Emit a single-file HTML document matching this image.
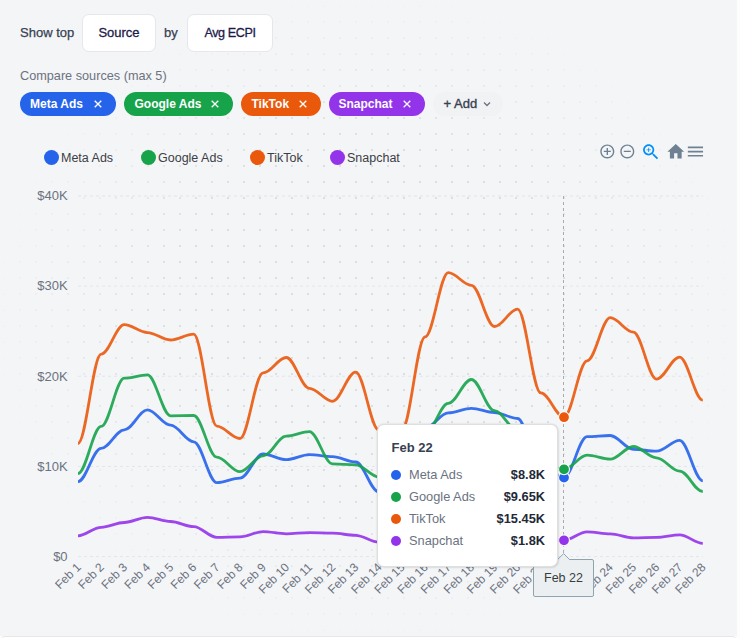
<!DOCTYPE html>
<html><head><meta charset="utf-8">
<style>
html,body{margin:0;padding:0;}
body{width:740px;height:638px;overflow:hidden;position:relative;background:#fdfdfd;font-family:"Liberation Sans",sans-serif;}
#page{position:absolute;left:0;top:0;width:737px;height:636px;background:#f4f5f7;overflow:hidden;}
#dots{position:absolute;left:0;top:0;width:737px;height:636px;
  background-image:radial-gradient(circle at 4px 6px,#dcdee2 0.9px,transparent 1.3px);
  background-size:16px 16px;background-position:0 0;
  -webkit-mask-image:radial-gradient(ellipse at center,#000 38%,rgba(0,0,0,0) 73%);
  mask-image:radial-gradient(ellipse at center,#000 38%,rgba(0,0,0,0) 73%);}
#bottom{position:absolute;left:0;top:636px;width:737px;height:10px;background:#fff;border-top:1px solid #e5e7eb;border-radius:5px 5px 0 0;box-sizing:border-box;}
.abs{position:absolute;white-space:nowrap;}
.lbl{font-size:13px;color:#374151;-webkit-text-stroke:0.25px #374151;}
.btn{position:absolute;top:14px;height:38px;box-sizing:border-box;background:#fff;border:1px solid #e5e7eb;border-radius:7px;font-size:13px;color:#1e1b4b;font-weight:normal;-webkit-text-stroke:0.3px #1e1b4b;line-height:36px;text-align:center;}
.chip{position:absolute;top:92px;height:24px;border-radius:12px;color:#fff;font-size:12px;font-weight:bold;line-height:24px;}
.chip .t{position:absolute;top:0;}
.chip .x{position:absolute;top:0;font-weight:normal;font-size:14px;}
.leg{position:absolute;top:151px;font-size:12.5px;color:#3b4046;}
.legdot{position:absolute;width:15px;height:15px;border-radius:50%;top:149.5px;}
svg{position:absolute;left:0;top:0;}
.yl{font-size:13px;fill:#6b7280;font-family:"Liberation Sans",sans-serif;}
.xl{font-size:12px;fill:#6b7280;font-family:"Liberation Sans",sans-serif;}
#tt{position:absolute;left:377px;top:424px;width:180.5px;height:143px;box-sizing:border-box;background:#fff;border:1px solid #e0e0e0;border-radius:7px;box-shadow:0 0 2px rgba(0,0,0,0.16),1px 1px 3px -1px rgba(0,0,0,0.12);}
#tt .h{position:absolute;left:13.5px;top:14.5px;font-size:13px;font-weight:bold;color:#374151;}
#tt .r{position:absolute;left:13px;height:18px;width:156px;}
#tt .d{position:absolute;left:0;top:3px;width:10px;height:10px;border-radius:50%;}
#tt .n{position:absolute;left:18px;top:0.8px;font-size:12.8px;color:#6b7280;}
#tt .v{position:absolute;right:2px;top:0.8px;font-size:12.8px;font-weight:bold;color:#1f2937;}
#xt{position:absolute;left:533px;top:559px;width:61px;height:37.5px;box-sizing:border-box;background:#eceff1;border:1px solid #90a4ae;border-radius:2px;font-size:12.5px;color:#373d3f;text-align:center;line-height:37.5px;}
</style></head>
<body>
<div id="page">
<div id="dots"></div>

<div class="abs lbl" style="left:20px;top:25px;">Show top</div>
<div class="btn" style="left:82px;width:74px;">Source</div>
<div class="abs lbl" style="left:164px;top:25px;">by</div>
<div class="btn" style="left:187px;width:86px;letter-spacing:-0.4px;font-size:12.6px;">Avg ECPI</div>

<div class="abs" style="left:20px;top:69px;font-size:12.7px;color:#6b7280;">Compare sources (max 5)</div>

<div class="chip" style="left:20px;width:96px;background:#2563eb;"><span class="t" style="left:10px;">Meta Ads</span><svg width="96" height="24" style="position:absolute;left:0;top:0"><path d="M74.7 8.7 L81.3 15.3 M81.3 8.7 L74.7 15.3" stroke="#fff" stroke-width="1.3"/></svg></div>
<div class="chip" style="left:124px;width:109px;background:#16a34a;"><span class="t" style="left:10.5px;">Google Ads</span><svg width="109" height="24" style="position:absolute;left:0;top:0"><path d="M87.7 8.7 L94.3 15.3 M94.3 8.7 L87.7 15.3" stroke="#fff" stroke-width="1.3"/></svg></div>
<div class="chip" style="left:241px;width:80px;background:#ea580c;"><span class="t" style="left:10.5px;">TikTok</span><svg width="80" height="24" style="position:absolute;left:0;top:0"><path d="M58.7 8.7 L65.3 15.3 M65.3 8.7 L58.7 15.3" stroke="#fff" stroke-width="1.3"/></svg></div>
<div class="chip" style="left:329px;width:96px;background:#9333ea;"><span class="t" style="left:9.5px;">Snapchat</span><svg width="96" height="24" style="position:absolute;left:0;top:0"><path d="M74.7 8.7 L81.3 15.3 M81.3 8.7 L74.7 15.3" stroke="#fff" stroke-width="1.3"/></svg></div>

<div class="abs" style="left:433px;top:92px;width:70px;height:24px;border-radius:12px;background:#f1f2f4;"></div>
<div class="abs" style="left:443.5px;top:96px;font-size:13px;font-weight:normal;-webkit-text-stroke:0.35px #374151;color:#374151;">+ Add</div>
<svg width="740" height="638" style="pointer-events:none">
  <path d="M484 102.5 L487 105.5 L490 102.5" fill="none" stroke="#6b7280" stroke-width="1.3"/>
</svg>

<div class="legdot" style="left:43.5px;background:#2563eb;"></div><div class="leg" style="left:61px;">Meta Ads</div>
<div class="legdot" style="left:140.5px;background:#16a34a;"></div><div class="leg" style="left:158px;">Google Ads</div>
<div class="legdot" style="left:249.5px;background:#ea580c;"></div><div class="leg" style="left:267px;">TikTok</div>
<div class="legdot" style="left:329.5px;background:#9333ea;"></div><div class="leg" style="left:347px;">Snapchat</div>

<svg width="740" height="638">
  <g><line x1="78" y1="556.60" x2="703" y2="556.60" stroke="#e2e5ea" stroke-width="1" stroke-dasharray="3 3"/><line x1="78" y1="466.44" x2="703" y2="466.44" stroke="#e2e5ea" stroke-width="1" stroke-dasharray="3 3"/><line x1="78" y1="376.28" x2="703" y2="376.28" stroke="#e2e5ea" stroke-width="1" stroke-dasharray="3 3"/><line x1="78" y1="286.12" x2="703" y2="286.12" stroke="#e2e5ea" stroke-width="1" stroke-dasharray="3 3"/><line x1="78" y1="195.96" x2="703" y2="195.96" stroke="#e2e5ea" stroke-width="1" stroke-dasharray="3 3"/></g>
  <g><text x="67.6" y="560.90" text-anchor="end" class="yl">$0</text><text x="67.6" y="470.74" text-anchor="end" class="yl">$10K</text><text x="67.6" y="380.58" text-anchor="end" class="yl">$20K</text><text x="67.6" y="290.42" text-anchor="end" class="yl">$30K</text><text x="67.6" y="200.26" text-anchor="end" class="yl">$40K</text></g>
  <g><text x="81.60" y="568.00" text-anchor="end" transform="rotate(-45 81.60 568.00)" class="xl">Feb 1</text><text x="104.74" y="568.00" text-anchor="end" transform="rotate(-45 104.74 568.00)" class="xl">Feb 2</text><text x="127.88" y="568.00" text-anchor="end" transform="rotate(-45 127.88 568.00)" class="xl">Feb 3</text><text x="151.02" y="568.00" text-anchor="end" transform="rotate(-45 151.02 568.00)" class="xl">Feb 4</text><text x="174.16" y="568.00" text-anchor="end" transform="rotate(-45 174.16 568.00)" class="xl">Feb 5</text><text x="197.30" y="568.00" text-anchor="end" transform="rotate(-45 197.30 568.00)" class="xl">Feb 6</text><text x="220.44" y="568.00" text-anchor="end" transform="rotate(-45 220.44 568.00)" class="xl">Feb 7</text><text x="243.58" y="568.00" text-anchor="end" transform="rotate(-45 243.58 568.00)" class="xl">Feb 8</text><text x="266.72" y="568.00" text-anchor="end" transform="rotate(-45 266.72 568.00)" class="xl">Feb 9</text><text x="289.86" y="568.00" text-anchor="end" transform="rotate(-45 289.86 568.00)" class="xl">Feb 10</text><text x="313.00" y="568.00" text-anchor="end" transform="rotate(-45 313.00 568.00)" class="xl">Feb 11</text><text x="336.14" y="568.00" text-anchor="end" transform="rotate(-45 336.14 568.00)" class="xl">Feb 12</text><text x="359.28" y="568.00" text-anchor="end" transform="rotate(-45 359.28 568.00)" class="xl">Feb 13</text><text x="382.42" y="568.00" text-anchor="end" transform="rotate(-45 382.42 568.00)" class="xl">Feb 14</text><text x="405.56" y="568.00" text-anchor="end" transform="rotate(-45 405.56 568.00)" class="xl">Feb 15</text><text x="428.70" y="568.00" text-anchor="end" transform="rotate(-45 428.70 568.00)" class="xl">Feb 16</text><text x="451.84" y="568.00" text-anchor="end" transform="rotate(-45 451.84 568.00)" class="xl">Feb 17</text><text x="474.98" y="568.00" text-anchor="end" transform="rotate(-45 474.98 568.00)" class="xl">Feb 18</text><text x="498.12" y="568.00" text-anchor="end" transform="rotate(-45 498.12 568.00)" class="xl">Feb 19</text><text x="521.26" y="568.00" text-anchor="end" transform="rotate(-45 521.26 568.00)" class="xl">Feb 20</text><text x="544.40" y="568.00" text-anchor="end" transform="rotate(-45 544.40 568.00)" class="xl">Feb 21</text><text x="567.54" y="568.00" text-anchor="end" transform="rotate(-45 567.54 568.00)" class="xl">Feb 22</text><text x="590.68" y="568.00" text-anchor="end" transform="rotate(-45 590.68 568.00)" class="xl">Feb 23</text><text x="613.82" y="568.00" text-anchor="end" transform="rotate(-45 613.82 568.00)" class="xl">Feb 24</text><text x="636.96" y="568.00" text-anchor="end" transform="rotate(-45 636.96 568.00)" class="xl">Feb 25</text><text x="660.10" y="568.00" text-anchor="end" transform="rotate(-45 660.10 568.00)" class="xl">Feb 26</text><text x="683.24" y="568.00" text-anchor="end" transform="rotate(-45 683.24 568.00)" class="xl">Feb 27</text><text x="706.38" y="568.00" text-anchor="end" transform="rotate(-45 706.38 568.00)" class="xl">Feb 28</text></g>
  <line x1="563.50" y1="196" x2="563.50" y2="556.6" stroke="#ababab" stroke-width="1" stroke-dasharray="3 3"/>
  <g><path d="M78.00 481.60 C86.10 481.60 93.04 448.30 101.14 448.30 C109.24 448.30 116.18 429.90 124.28 429.90 C132.38 429.90 139.32 409.90 147.42 409.90 C155.52 409.90 162.46 425.20 170.56 425.20 C178.66 425.20 185.60 441.80 193.70 441.80 C201.80 441.80 208.74 482.70 216.84 482.70 C224.94 482.70 231.88 478.20 239.98 478.20 C248.08 478.20 255.02 454.00 263.12 454.00 C271.22 454.00 278.16 459.70 286.26 459.70 C294.36 459.70 301.30 454.60 309.40 454.60 C317.50 454.60 324.44 456.70 332.54 456.70 C340.64 456.70 347.58 462.00 355.68 462.00 C363.78 462.00 370.72 492.00 378.82 492.00 C386.92 492.00 393.86 470.00 401.96 470.00 C410.06 470.00 417.00 428.00 425.10 428.00 C433.20 428.00 440.14 412.90 448.24 412.90 C456.34 412.90 463.28 408.30 471.38 408.30 C479.48 408.30 486.42 412.60 494.52 412.60 C502.62 412.60 509.56 418.50 517.66 418.50 C525.76 418.50 532.70 470.00 540.80 470.00 C548.90 470.00 555.84 477.20 563.94 477.20 C572.04 477.20 578.98 436.60 587.08 436.60 C595.18 436.60 602.12 435.50 610.22 435.50 C618.32 435.50 625.26 449.30 633.36 449.30 C641.46 449.30 648.40 451.20 656.50 451.20 C664.60 451.20 671.54 440.40 679.64 440.40 C687.74 440.40 694.68 480.80 702.78 480.80" fill="none" stroke="#2563eb" stroke-width="2.8" stroke-opacity="0.9" stroke-linecap="butt" stroke-linejoin="round"/><path d="M78.00 473.50 C86.10 473.50 93.04 426.40 101.14 426.40 C109.24 426.40 116.18 378.20 124.28 378.20 C132.38 378.20 139.32 374.90 147.42 374.90 C155.52 374.90 162.46 415.80 170.56 415.80 C178.66 415.80 185.60 415.50 193.70 415.50 C201.80 415.50 208.74 457.20 216.84 457.20 C224.94 457.20 231.88 471.70 239.98 471.70 C248.08 471.70 255.02 455.90 263.12 455.90 C271.22 455.90 278.16 436.20 286.26 436.20 C294.36 436.20 301.30 431.60 309.40 431.60 C317.50 431.60 324.44 463.90 332.54 463.90 C340.64 463.90 347.58 464.80 355.68 464.80 C363.78 464.80 370.72 477.00 378.82 477.00 C386.92 477.00 393.86 470.00 401.96 470.00 C410.06 470.00 417.00 434.00 425.10 434.00 C433.20 434.00 440.14 403.40 448.24 403.40 C456.34 403.40 463.28 379.50 471.38 379.50 C479.48 379.50 486.42 410.70 494.52 410.70 C502.62 410.70 509.56 430.60 517.66 430.60 C525.76 430.60 532.70 465.00 540.80 465.00 C548.90 465.00 555.84 469.40 563.94 469.40 C572.04 469.40 578.98 455.20 587.08 455.20 C595.18 455.20 602.12 459.20 610.22 459.20 C618.32 459.20 625.26 446.50 633.36 446.50 C641.46 446.50 648.40 457.80 656.50 457.80 C664.60 457.80 671.54 471.10 679.64 471.10 C687.74 471.10 694.68 491.50 702.78 491.50" fill="none" stroke="#16a34a" stroke-width="2.8" stroke-opacity="0.9" stroke-linecap="butt" stroke-linejoin="round"/><path d="M78.00 443.50 C86.10 443.50 93.04 354.10 101.14 354.10 C109.24 354.10 116.18 324.60 124.28 324.60 C132.38 324.60 139.32 332.60 147.42 332.60 C155.52 332.60 162.46 340.00 170.56 340.00 C178.66 340.00 185.60 334.20 193.70 334.20 C201.80 334.20 208.74 426.10 216.84 426.10 C224.94 426.10 231.88 438.50 239.98 438.50 C248.08 438.50 255.02 372.90 263.12 372.90 C271.22 372.90 278.16 357.50 286.26 357.50 C294.36 357.50 301.30 388.30 309.40 388.30 C317.50 388.30 324.44 401.30 332.54 401.30 C340.64 401.30 347.58 372.10 355.68 372.10 C363.78 372.10 370.72 430.00 378.82 430.00 C386.92 430.00 393.86 429.60 401.96 429.60 C410.06 429.60 417.00 336.90 425.10 336.90 C433.20 336.90 440.14 272.70 448.24 272.70 C456.34 272.70 463.28 285.30 471.38 285.30 C479.48 285.30 486.42 326.50 494.52 326.50 C502.62 326.50 509.56 309.10 517.66 309.10 C525.76 309.10 532.70 392.90 540.80 392.90 C548.90 392.90 555.84 417.20 563.94 417.20 C572.04 417.20 578.98 360.80 587.08 360.80 C595.18 360.80 602.12 317.70 610.22 317.70 C618.32 317.70 625.26 332.10 633.36 332.10 C641.46 332.10 648.40 379.10 656.50 379.10 C664.60 379.10 671.54 357.10 679.64 357.10 C687.74 357.10 694.68 400.10 702.78 400.10" fill="none" stroke="#ea580c" stroke-width="2.8" stroke-opacity="0.9" stroke-linecap="butt" stroke-linejoin="round"/><path d="M78.00 535.80 C86.10 535.80 93.04 527.30 101.14 527.30 C109.24 527.30 116.18 522.50 124.28 522.50 C132.38 522.50 139.32 517.40 147.42 517.40 C155.52 517.40 162.46 521.50 170.56 521.50 C178.66 521.50 185.60 526.60 193.70 526.60 C201.80 526.60 208.74 537.40 216.84 537.40 C224.94 537.40 231.88 536.80 239.98 536.80 C248.08 536.80 255.02 531.60 263.12 531.60 C271.22 531.60 278.16 533.80 286.26 533.80 C294.36 533.80 301.30 532.60 309.40 532.60 C317.50 532.60 324.44 533.20 332.54 533.20 C340.64 533.20 347.58 535.30 355.68 535.30 C363.78 535.30 370.72 542.20 378.82 542.20 C386.92 542.20 393.86 542.00 401.96 542.00 C410.06 542.00 417.00 541.00 425.10 541.00 C433.20 541.00 440.14 540.00 448.24 540.00 C456.34 540.00 463.28 540.00 471.38 540.00 C479.48 540.00 486.42 540.00 494.52 540.00 C502.62 540.00 509.56 540.00 517.66 540.00 C525.76 540.00 532.70 540.00 540.80 540.00 C548.90 540.00 555.84 540.30 563.94 540.30 C572.04 540.30 578.98 531.80 587.08 531.80 C595.18 531.80 602.12 533.90 610.22 533.90 C618.32 533.90 625.26 537.90 633.36 537.90 C641.46 537.90 648.40 537.30 656.50 537.30 C664.60 537.30 671.54 534.90 679.64 534.90 C687.74 534.90 694.68 543.40 702.78 543.40" fill="none" stroke="#9333ea" stroke-width="2.8" stroke-opacity="0.9" stroke-linecap="butt" stroke-linejoin="round"/></g>
  <g><circle cx="564.00" cy="417.20" r="5.45" fill="#ea580c" stroke="#fff" stroke-width="1.1"/><circle cx="564.00" cy="477.60" r="5.45" fill="#2563eb" stroke="#fff" stroke-width="1.1"/><circle cx="564.00" cy="469.30" r="5.45" fill="#16a34a" stroke="#fff" stroke-width="1.1"/><circle cx="564.00" cy="540.30" r="5.45" fill="#9333ea" stroke="#fff" stroke-width="1.1"/></g>
  <!-- toolbar -->
  <g transform="translate(598.9 143) scale(0.7)" fill="#6e8192"><path d="M13 7h-2v4H7v2h4v4h2v-4h4v-2h-4V7zm-1-5C6.480 2 2 6.48 2 12s4.48 10 10 10 10-4.48 10-10S17.52 2 12 2zm0 18c-4.41 0-8-3.59-8-8s3.59-8 8-8 8 3.59 8 8-3.59 8-8 8z"/></g>
  <g transform="translate(618.9 143) scale(0.7)" fill="#6e8192"><path d="M7 11v2h10v-2H7zm5-9C6.48 2 2 6.48 2 12s4.48 10 10 10 10-4.48 10-10S17.52 2 12 2zm0 18c-4.41 0-8-3.59-8-8s3.59-8 8-8 8 3.59 8 8-3.59 8-8 8z"/></g>
  <g transform="translate(640.5 141.7) scale(0.86)" fill="#008ffb"><path d="M15.5 14h-.79l-.28-.27C15.41 12.59 16 11.11 16 9.5 16 5.91 13.090 3 9.5 3S3 5.91 3 9.5 5.91 16 9.5 16c1.61 0 3.09-.59 4.23-1.57l.27.28v.79l5 4.99L20.49 19l-4.99-5zm-6 0C7.01 14 5 11.99 5 9.5S7.01 5 9.5 5 14 7.01 14 9.5 11.99 14 9.5 14z"/><path d="M12 10h-2v2H9v-2H7V9h2V7h1v2h2v1z"/></g>
  <g transform="translate(665.7 141.6) scale(0.84)" fill="#6e8192"><path d="M10 20v-6h4v6h5v-8h3L12 3 2 12h3v8z"/></g>
  <g transform="translate(685.3 141.4) scale(0.845)" fill="#6e8192"><path d="M3 18h18v-2H3v2zm0-5h18v-2H3v2zm0-7v2h18V6H3z"/></g>
</svg>

<div id="xt">Feb 22</div>
<svg width="740" height="638" style="pointer-events:none">
  <path d="M557.2 560.2 L563.6 553.6 L570 560.2 Z" fill="#eceff1"/><path d="M557.6 559.6 L563.6 553.6 L569.6 559.6" fill="none" stroke="#90a4ae" stroke-width="1"/>
</svg>

<div id="tt">
  <div class="h">Feb 22</div>
  <div class="r" style="top:41.5px;"><div class="d" style="background:#2563eb"></div><div class="n">Meta Ads</div><div class="v">$8.8K</div></div>
  <div class="r" style="top:63.5px;"><div class="d" style="background:#16a34a"></div><div class="n">Google Ads</div><div class="v">$9.65K</div></div>
  <div class="r" style="top:85.5px;"><div class="d" style="background:#ea580c"></div><div class="n">TikTok</div><div class="v">$15.45K</div></div>
  <div class="r" style="top:107.5px;"><div class="d" style="background:#9333ea"></div><div class="n">Snapchat</div><div class="v">$1.8K</div></div>
</div>
</div>
<div id="bottom"></div>
</body></html>
